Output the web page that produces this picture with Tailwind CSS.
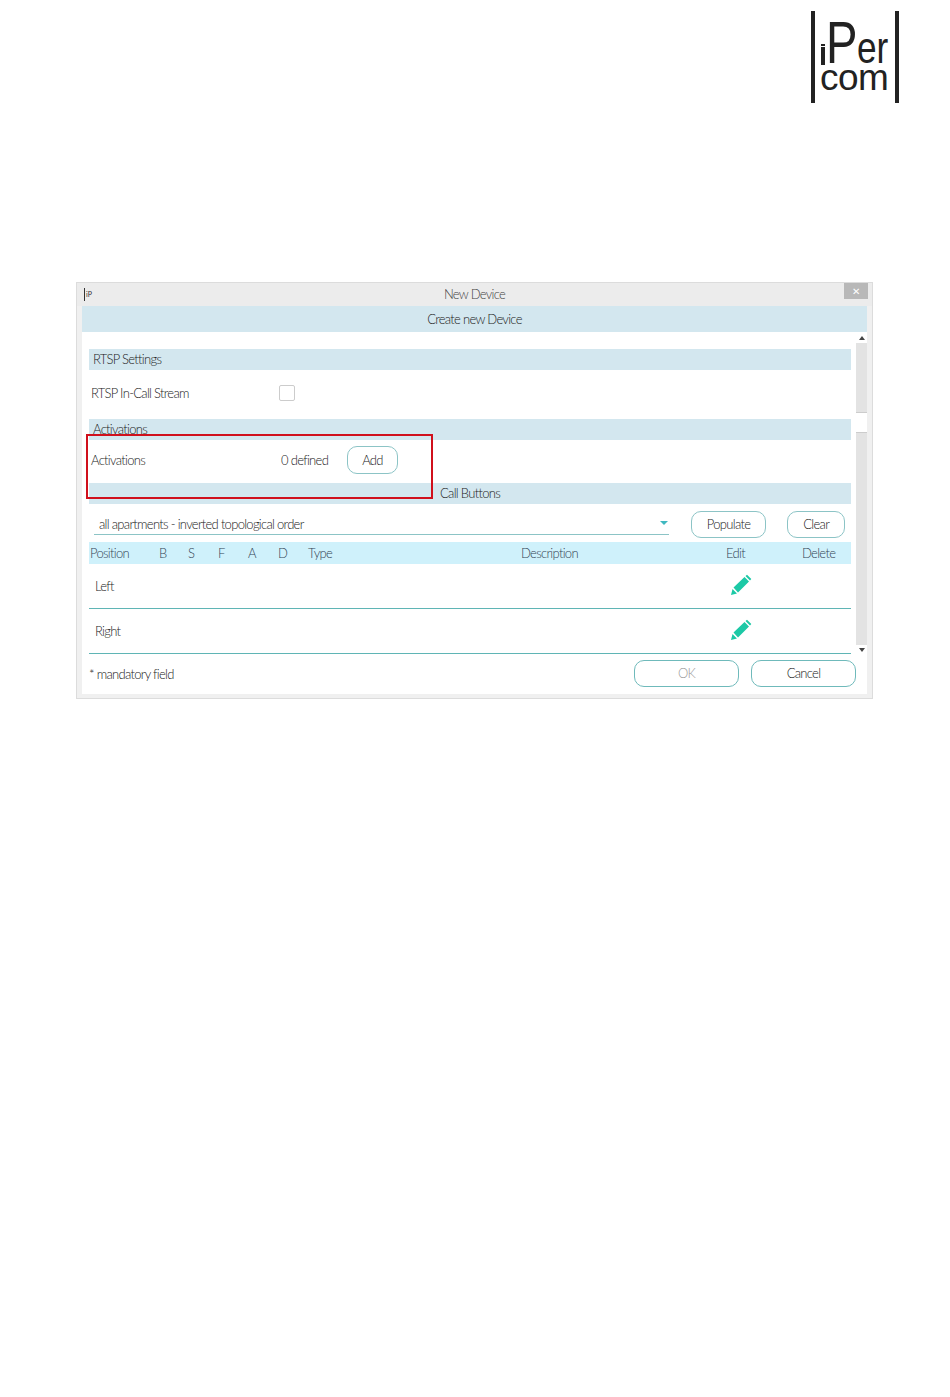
<!DOCTYPE html>
<html lang="en">
<head>
    <meta charset="UTF-8">
    <title>New Device</title>
    <script src="https://cdn.jsdelivr.net/npm/@tailwindcss/browser@4"></script>
</head>
<body class="bg-white h-[1397px] font-['Lato',sans-serif] font-light text-[13px] tracking-[-0.7px] text-[#222]">
    <!-- logo -->
    <header class="h-[282px] pt-[11px] pr-[51px] flex justify-end">
        <div class="w-[88px] h-[92px] border-x-[4px] border-[#222] relative text-[#222] font-['Liberation_Sans',sans-serif] font-normal tracking-normal overflow-hidden">
            <div class="absolute left-[6px] top-[33px] w-[4px] h-[2px] bg-[#222]"></div>
            <div class="absolute left-[6px] top-[36px] w-[4px] h-[18px] bg-[#222]"></div>
            <div class="absolute left-[11px] top-[10px] text-[59px] leading-[44px] scale-x-[0.8] origin-left">P</div>
            <div class="absolute left-[42px] top-[19px] text-[44px] leading-[36px] scale-x-[0.8] origin-left">er</div>
            <div class="absolute left-[5px] top-[53px] text-[37px] leading-[28px] tracking-[-0.5px]">com</div>
        </div>
    </header>

    <!-- dialog -->
    <div class="relative w-[797px] h-[417px] ml-[76px] bg-[#f0f0f0] border border-[#dcdcdc] flex flex-col">
        <div class="h-[23px] shrink-0 bg-[#ececec] flex items-center justify-center relative text-[#444]">
            <span class="absolute left-[7px] top-[5px] w-[12px] h-[13px] border-l border-[#333] text-[7px] leading-[13px] pl-[1px] text-[#333] font-normal tracking-normal">iP</span>
            <span class="pt-[1px]">New Device</span>
            <span class="absolute right-[4px] top-0 w-[24px] h-[16px] bg-[#b8b8b8] text-white text-[10px] leading-[16px] text-center font-normal">✕</span>
        </div>

        <div class="mx-[5px] flex-1 bg-white flex flex-col">
            <div class="h-[26px] shrink-0 pt-[1px] bg-[#d3e7ef] flex items-center justify-center">Create new Device</div>

            <div class="h-[323px] flex">
                <div class="w-[774px] pl-[7px] pt-[17px]">
                    <div class="w-[762px] h-[21px] bg-[#d3e7ef] pl-[4px] flex items-center">RTSP Settings</div>
                    <div class="h-[49px] pl-[2px] flex items-center">
                        <span class="w-[188px] mb-[2px]">RTSP In-Call Stream</span>
                        <span class="w-[16px] h-[16px] mb-[3px] border border-[#ccc] rounded-[2px]"></span>
                    </div>
                    <div class="w-[762px] h-[21px] bg-[#d3e7ef] pl-[4px] flex items-center">Activations</div>
                    <div class="h-[43px] pl-[2px] flex items-center">
                        <span class="w-[190px] mb-[1px]">Activations</span>
                        <span class="w-[66px] mb-[1px]">0 defined</span>
                        <button class="w-[51px] h-[28px] mb-[3px] pt-[2px] border border-[#8cc4c6] rounded-[10px]">Add</button>
                    </div>
                    <div class="w-[762px] h-[21px] bg-[#d3e7ef] flex items-center justify-center">Call Buttons</div>
                    <div class="w-[756px] h-[38px] flex items-center">
                        <div class="w-[578px] ml-[5px] h-[24px] pl-[5px] pt-[5px] border-b border-[#8cc4c6] flex items-center justify-between pr-[2px]">
                            <span>all apartments - inverted topological order</span>
                            <span class="mr-[-1px] mb-[5px] w-0 h-0 border-x-[4px] border-x-transparent border-t-[4px] border-t-[#3fb8c0]"></span>
                        </div>
                        <button class="ml-[22px] mt-[2px] pt-[1px] w-[76px] h-[27px] border border-[#8cc4c6] rounded-[10px]">Populate</button>
                        <button class="ml-[21px] mt-[2px] pt-[1px] w-[58px] h-[27px] border border-[#8cc4c6] rounded-[10px]">Clear</button>
                    </div>
                    <div class="w-[762px] h-[22px] pt-[1px] bg-[#cff1fb] pl-[1px] grid grid-cols-[69px_29px_30px_30px_30px_30px_213px_205px_76px_1fr] items-center text-[#345]">
                        <span>Position</span><span>B</span><span>S</span><span>F</span><span>A</span><span>D</span><span>Type</span><span>Description</span><span>Edit</span><span>Delete</span>
                    </div>
                    <div class="w-[762px] h-[45px] border-b border-[#5fb5b5] pl-[6px] flex items-center justify-between">
                        <span class="mt-[1px]">Left</span>
                        <svg class="mr-[99px] mb-[2px]" width="22" height="22" viewBox="0 0 22 22"><path d="M1 21l1.500-6 4.500 4.500zM3.500 13.500L14.500 3l4.500 4.500L8 18.500zM15.500 2l1.500-1.300 4.300 4.300L20 6.500z" fill="#1cc9a6"/></svg>
                    </div>
                    <div class="w-[762px] h-[45px] border-b border-[#5fb5b5] pl-[6px] flex items-center justify-between">
                        <span class="mt-[1px]">Right</span>
                        <svg class="mr-[99px] mb-[2px]" width="22" height="22" viewBox="0 0 22 22"><path d="M1 21l1.500-6 4.500 4.500zM3.500 13.500L14.500 3l4.500 4.500L8 18.500zM15.500 2l1.500-1.300 4.300 4.300L20 6.500z" fill="#1cc9a6"/></svg>
                    </div>
                </div>

                <!-- scrollbar -->
                <div class="w-[11px] bg-[#e3e3e3] flex flex-col">
                    <div class="h-[11px] bg-white flex items-center justify-center"><span class="w-0 h-0 border-x-[3px] border-x-transparent border-b-[4px] border-b-[#444]"></span></div>
                    <div class="h-[69px]"></div>
                    <div class="h-[21px] bg-white border-y border-[#ccc]"></div>
                    <div class="flex-1"></div>
                    <div class="h-[10px] bg-white flex items-center justify-center"><span class="w-0 h-0 border-x-[3px] border-x-transparent border-t-[4px] border-t-[#444]"></span></div>
                </div>
            </div>

            <div class="flex-1 pl-[7px] flex items-center">
                <span class="w-[545px]">* mandatory field</span>
                <button class="w-[105px] h-[27px] mb-[2px] pt-[1px] border border-[#6fbabb] rounded-[10px] text-[#999]">OK</button>
                <button class="ml-[12px] w-[105px] h-[27px] mb-[2px] pt-[1px] border border-[#6fbabb] rounded-[10px]">Cancel</button>
            </div>
        </div>
        <div class="h-[4px] shrink-0"></div>
    </div>

    <!-- highlight over the dialog -->
    <div class="absolute left-[86px] top-[434px] w-[347px] h-[65px] border-2 border-[#d0101c]"></div>
</body>
</html>
